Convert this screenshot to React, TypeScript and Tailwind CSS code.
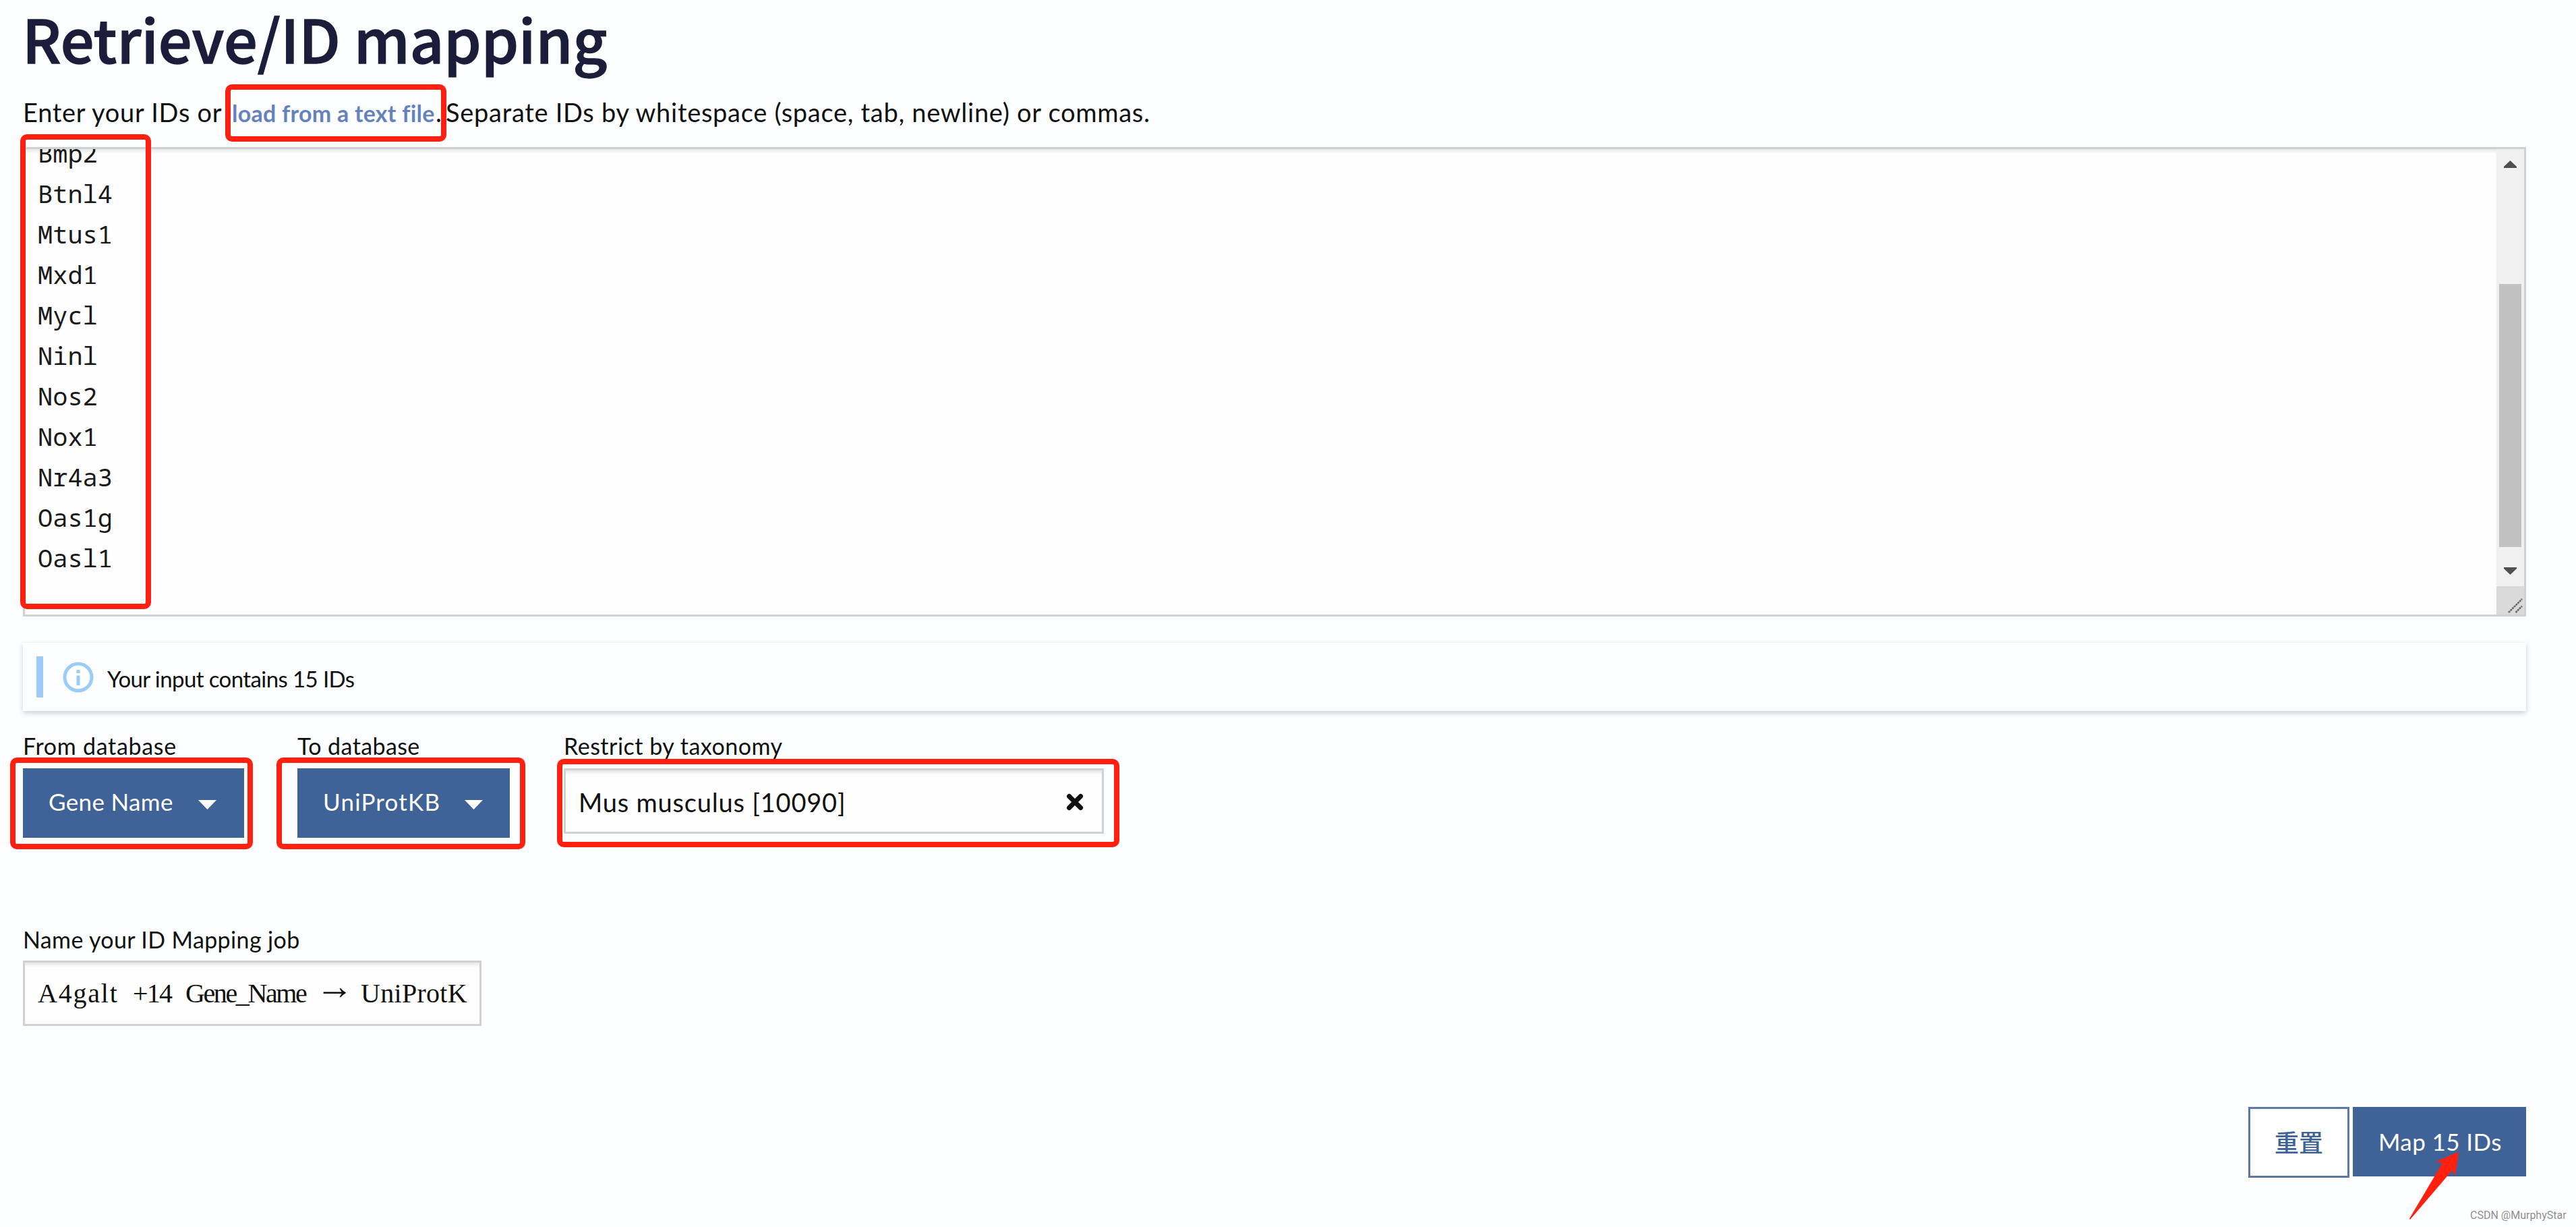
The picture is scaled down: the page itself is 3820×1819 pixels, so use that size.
import React from "react";

const ids = [
  "Bmp2",
  "Btnl4",
  "Mtus1",
  "Mxd1",
  "Mycl",
  "Ninl",
  "Nos2",
  "Nox1",
  "Nr4a3",
  "Oas1g",
  "Oasl1",
];

/* red marker drawn over the form */
function Marker({ className }: { className: string }) {
  return (
    <div
      className={`absolute rounded-[10px] border-8 border-[#ff2010] ${className}`}
    />
  );
}

function DropdownButton({ label, className }: { label: string; className: string }) {
  return (
    <button
      className={`flex h-[103px] items-center justify-between bg-[#3f6397] text-[35px] leading-[40px] text-white ${className}`}
    >
      <span className="-mt-1.5 whitespace-nowrap">{label}</span>
      <svg width="27" height="14" viewBox="0 0 27 14" className="mt-1">
        <path d="M0 0H27L13.5 14Z" fill="white" />
      </svg>
    </button>
  );
}

export default function App() {
  return (
    <div className="relative flex h-[1819px] w-[3820px] flex-col overflow-hidden bg-[#fdfeff] pl-[34px] pr-[74px] font-['Lato',sans-serif] text-[#111]">
      {/* title */}
      <h1 className="-ml-px h-[112px] whitespace-nowrap font-['Noto_Sans_CJK_SC',sans-serif] text-[88px] font-medium leading-[112px] text-[#1b1d3a] [-webkit-text-stroke:1.4px_#1b1d3a]">
        Retrieve/ID mapping
      </h1>
      <p className="mt-[30px] flex h-12 whitespace-nowrap text-[38px] leading-[48px] tracking-[0.72px]">
        <span className="w-[310px]">Enter your IDs or</span>
        <a className="mt-0.5 w-[302px] text-[34px] font-bold tracking-[0.25px] text-[#6682bd]">
          load from a text file
        </a>
        <span className="w-[15px]">.</span>
        <span>Separate IDs by whitespace (space, tab, newline) or commas.</span>
      </p>

      {/* id list */}
      <div className="mt-7 flex h-[696px] w-[3712px] justify-between border-[3px] border-[#d0d2d2] bg-[#fefefe]">
        <div className="flex-1 overflow-hidden pl-[19px] shadow-[inset_0_5px_5px_-2px_rgba(0,0,0,0.1)]">
          <div className="-mt-[24px] font-['Noto_Sans_Mono','Liberation_Mono',monospace] text-[37px] leading-[60px] text-[#1a1a1a]">
            {ids.map((id) => (
              <div key={id}>{id}</div>
            ))}
          </div>
        </div>
        {/* scrollbar */}
        <div className="flex w-[41px] flex-col items-center bg-[#f0f0f0]">
          <svg width="19" height="11" viewBox="0 0 19 11" className="mt-[17px]">
            <path d="M9.5 0L19 9V11H0V9Z" fill="#505050" />
          </svg>
          <div className="mt-[172px] h-[390px] w-[33px] bg-[#c1c1c1]" />
          <svg width="19" height="11" viewBox="0 0 19 11" className="mt-[30px]">
            <path d="M0 0H19V2L9.5 11L0 2Z" fill="#505050" />
          </svg>
          <div className="mt-auto flex h-[42px] w-[41px] items-end justify-end bg-[#dadada] pb-0.5 pr-0.5">
            <svg width="22" height="22" viewBox="0 0 22 22" fill="none" stroke="#6a6a6a" strokeWidth="2.6">
              <path d="M1 21L21 1M11.5 21L21 11.5" strokeDasharray="3 0.8" />
            </svg>
          </div>
        </div>
      </div>

      {/* info message */}
      <div className="mt-[39px] flex h-[101px] w-[3712px] items-center bg-[#fdfeff] pl-5 shadow-[0_3px_8px_rgba(10,10,20,0.2)]">
        <div className="h-[61px] w-2.5 bg-[#9accf7]" />
        <svg width="46" height="46" viewBox="0 0 46 46" className="ml-[29px]" fill="none" stroke="#9accf7">
          <circle cx="23" cy="23" r="20" strokeWidth="5" />
          <path d="M23 20.5V35M23 12V17" strokeWidth="5" />
        </svg>
        <span className="ml-5 mt-1 text-[33px] leading-[40px] tracking-[-0.6px]">
          Your input contains 15 IDs
        </span>
      </div>

      {/* databases */}
      <div className="mt-8 flex">
        <div className="w-[407px]">
          <div className="h-10 text-[34px] leading-[40px] tracking-[0.7px]">From database</div>
          <DropdownButton label="Gene Name" className="mt-[13px] w-[328px] pl-[38px] pr-[41px] tracking-[0.35px]" />
        </div>
        <div className="w-[395px]">
          <div className="h-10 text-[34px] leading-[40px] tracking-[0.4px]">To database</div>
          <DropdownButton label="UniProtKB" className="mt-[13px] w-[315px] pl-[38px] pr-10 tracking-[1.2px]" />
        </div>
        <div>
          <div className="h-10 text-[34px] leading-[40px] tracking-[0.5px]">Restrict by taxonomy</div>
          <div className="mt-[13px] flex h-[97px] w-[801px] items-center justify-between border-[3px] border-[#d0d2d2] bg-[#fefefe] pl-[19px] pr-[27px] shadow-[inset_0_5px_5px_-2px_rgba(0,0,0,0.1)]">
            <span className="mt-0.5 text-[38px] leading-[48px] tracking-[0.8px]">Mus musculus [10090]</span>
            <svg width="26" height="26" viewBox="0 0 26 26" className="mt-0.5" fill="none" stroke="#111" strokeWidth="7" strokeLinecap="round">
              <path d="M4.5 4.5L21.5 21.5M21.5 4.5L4.5 21.5" />
            </svg>
          </div>
        </div>
      </div>

      {/* job name */}
      <div className="mt-[131px] h-10 text-[34px] leading-[40px] tracking-[0.36px]">
        Name your ID Mapping job
      </div>
      <div className="mt-[11px] flex h-[97px] w-[680px] items-center whitespace-nowrap border-[3px] border-[#d0d2d2] bg-[#fefefe] pl-[19px] font-['Liberation_Serif',serif] text-[40px] leading-[48px] shadow-[inset_0_5px_5px_-2px_rgba(0,0,0,0.1)]">
        <span className="w-[141px] tracking-[1.8px]">A4galt</span>
        <span className="w-[78px] tracking-[-1.8px]">+14</span>
        <span className="w-[193px] tracking-[-2.4px]">Gene_Name</span>
        <span className="-mt-[22px] w-[67px] text-[56px]">→</span>
        <span className="tracking-[0.3px]">UniProtK</span>
      </div>

      {/* submit */}
      <div className="mt-[120px] flex w-[3712px] items-start justify-end gap-[5px]">
        <button className="flex h-[105px] w-[150px] items-center justify-center border-[3px] border-[#5a79a8] bg-white font-['Noto_Sans_CJK_SC',sans-serif] text-[36px] font-medium leading-[48px] text-[#3f6397]">
          <span className="-mt-1">重置</span>
        </button>
        <button className="flex h-[103px] w-[257px] items-center bg-[#3f6397] pl-[38px] text-[35px] leading-[40px] tracking-[0.4px] text-white">
          <span className="-mt-0.5">Map 15 IDs</span>
        </button>
      </div>

      {/* markers */}
      <Marker className="left-[334px] top-[125px] h-[85px] w-[328px]" />
      <Marker className="left-[30px] top-[199px] h-[704px] w-[194px]" />
      <Marker className="left-[15px] top-[1123px] h-[136px] w-[360px]" />
      <Marker className="left-[410px] top-[1123px] h-[136px] w-[369px]" />
      <Marker className="left-[826px] top-[1125px] h-[131px] w-[834px]" />
      <svg width="74" height="102" viewBox="0 0 74 102" className="absolute left-[3573px] top-[1707px]">
        <path d="M73 0.5L38.5 15.5L49 17L0 99.5L1 101L63.5 28L68 36.5Z" fill="#ff2010" />
      </svg>
      <span className="absolute left-[3663px] top-[1792px] whitespace-nowrap font-['Roboto',sans-serif] text-[16px] leading-[20px] text-[#8f8f8f]">
        CSDN @MurphyStar
      </span>
    </div>
  );
}
